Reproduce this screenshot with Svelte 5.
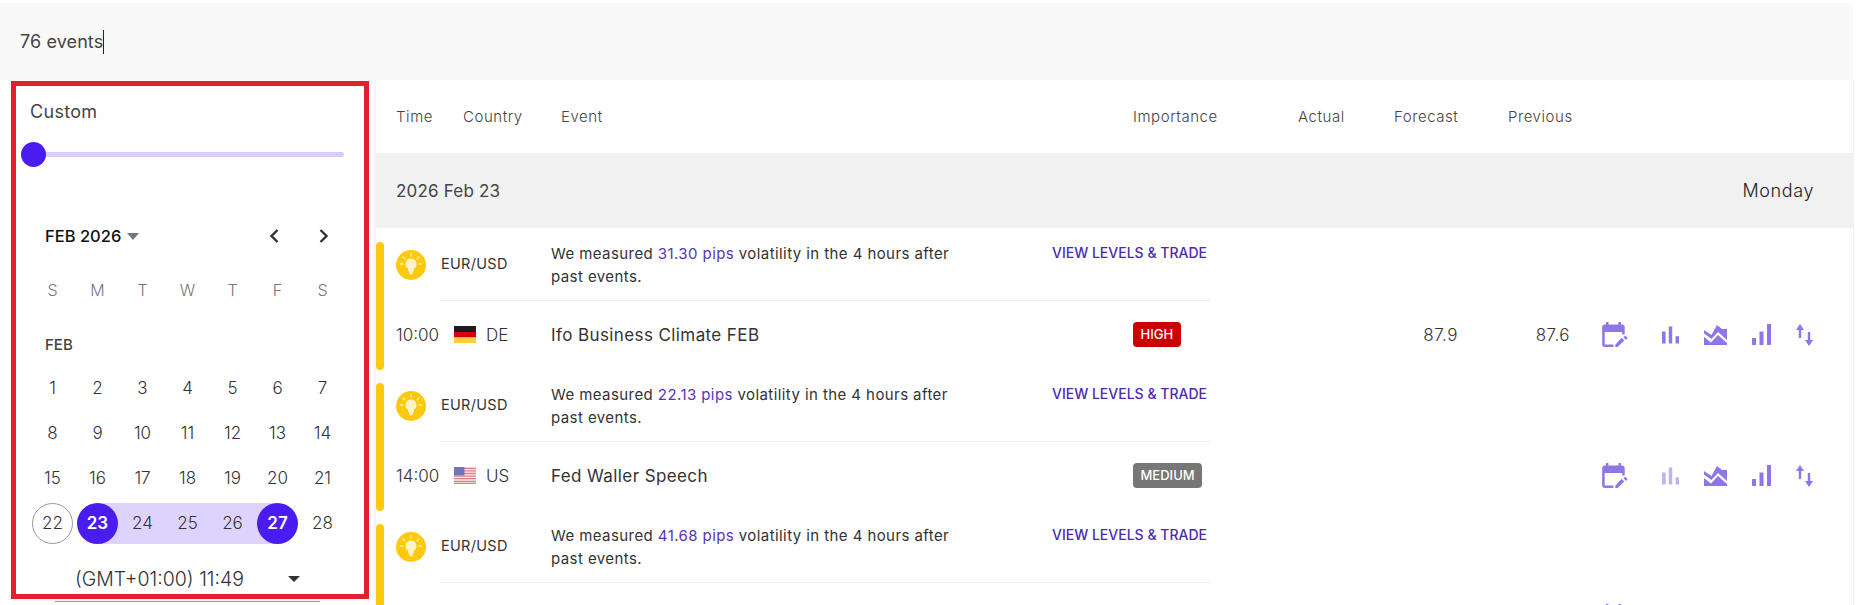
<script lang="ts">
  const dow = ['S', 'M', 'T', 'W', 'T', 'F', 'S']
  const weeks = [
    [1, 2, 3, 4, 5, 6, 7],
    [8, 9, 10, 11, 12, 13, 14],
    [15, 16, 17, 18, 19, 20, 21],
    [22, 23, 24, 25, 26, 27, 28]
  ]
  const columns = ['Time', 'Country', 'Event', 'Importance', 'Actual', 'Forecast', 'Previous']

  const events = [
    { pips: '31.30', time: '10:00', flag: 'de', country: 'DE', name: 'Ifo Business Climate FEB', level: 'HIGH', forecast: '87.9', previous: '87.6', chart: true },
    { pips: '22.13', time: '14:00', flag: 'us', country: 'US', name: 'Fed Waller Speech', level: 'MEDIUM', forecast: '', previous: '', chart: false },
    { pips: '41.68', time: '', flag: '', country: '', name: '', level: '', forecast: '', previous: '', chart: true }
  ]
</script>

{#snippet bulb()}
  <svg class="bulb" width="30" height="30" viewBox="0 0 30 30">
    <circle cx="15" cy="15" r="15" fill="#fdc90f" />
    <path d="M15 8.500a5.500 5.500 0 0 0-3 10.100V20l2 4.500h2l2-4.500v-1.400A5.500 5.500 0 0 0 15 8.500z" fill="#fff3c4" />
    <path d="M15 3.500v2.500M7 7l1.800 1.800M23 7l-1.800 1.800M4.500 14h2.300M23.200 14h2.300" stroke="#fff3c4" stroke-width="1.300" stroke-linecap="round" />
  </svg>
{/snippet}

{#snippet flag(code: string)}
  {#if code === 'de'}
    <svg width="22" height="17" viewBox="0 0 22 17">
      <rect width="22" height="6" fill="#1c1c1c" />
      <rect y="6" width="22" height="5.500" fill="#d9000d" />
      <rect y="11.500" width="22" height="5.500" fill="#ffce3a" />
    </svg>
  {:else if code === 'us'}
    <svg width="22" height="17" viewBox="0 0 22 17">
      <rect width="22" height="17" fill="#f6eeee" />
      <path d="M0 1.300h22M0 3.900h22M0 6.500h22M0 9.100h22M0 11.700h22M0 14.300h22M0 16.400h22" stroke="#dd7f86" stroke-width="1.300" />
      <rect width="10.500" height="8.500" fill="#6f76b3" />
    </svg>
  {:else}
    <span></span>
  {/if}
{/snippet}

{#snippet actions(chart: boolean)}
  <div class="actions">
    <svg class="cal" width="26" height="25" viewBox="3 2 20.500 20">
      <path d="M5 10h14v2h2V6c0-1.100-.9-2-2-2h-1V2h-2v2H8V2H6v2H5c-1.100 0-2 .9-2 2v14c0 1.100.9 2 2 2h7v-2H5V10zm17.840 4.280l-.71-.71c-.39-.39-1.020-.39-1.410 0l-.71.71 2.120 2.120.71-.71c.39-.39.39-1.020 0-1.410zM13.500 20.120V22h1.880l5.300-5.300-2.120-2.120z" />
    </svg>
    <svg class:faded={!chart} width="17" height="18" viewBox="5 5 14 14">
      <path d="M5 9.200h3V19H5zM10.600 5h2.800v14h-2.800zm5.600 8H19v6h-2.800z" />
    </svg>
    <svg width="23" height="21" viewBox="0 0 23 21">
      <path d="M0 6l7.500 5L13 1l5 4h5v11l-9-8-6.500 7L0 9.500zM0 13l7 5.500L14 11l9 8v2H0z" />
    </svg>
    <svg width="19" height="21" viewBox="0 0 19 21">
      <path d="M0 14h4v7H0zM7.500 7.500h4V21h-4zM15 0h4v21h-4z" />
    </svg>
    <svg width="17" height="22" viewBox="0 0 17 22">
      <path d="M4 0l4 6H5.200v8H2.800V6H0zM13 22l-4-6h2.800V8h2.400v8H17z" />
    </svg>
  </div>
{/snippet}

<div class="page">
  <div class="topbar"><span>76 events</span><i class="caret"></i></div>

  <div class="body">
    <div class="sidewrap">
      <aside class="side">
        <div class="custom">Custom</div>
        <div class="slider"><span class="knob"></span></div>

        <div class="month">
          <strong>FEB 2026</strong><i class="tri grey"></i>
          <span class="nav">
            <svg width="12" height="16" viewBox="0 0 12 16"><path d="M9.500 2L3.500 8l6 6" fill="none" stroke="#333" stroke-width="2.400" /></svg>
            <svg width="12" height="16" viewBox="0 0 12 16"><path d="M2.500 2l6 6-6 6" fill="none" stroke="#333" stroke-width="2.400" /></svg>
          </span>
        </div>

        <div class="grid dow">
          {#each dow as d}<span>{d}</span>{/each}
        </div>
        <div class="feb">FEB</div>
        {#each weeks as week}
          <div class="grid week">
            {#each week as day}
              <span
                class="day"
                class:today={day === 22}
                class:edge={day === 23 || day === 27}
                class:start={day === 23}
                class:end={day === 27}
                class:range={day > 23 && day < 27}
              >{day}</span>
            {/each}
          </div>
        {/each}

        <div class="zone"><span>(GMT+01:00) 11:49</span><i class="tri dark"></i></div>
      </aside>
      <div class="scrollline"></div>
    </div>

    <main class="table">
      <header class="cols">
        {#each columns as c}<span>{c}</span>{/each}
      </header>
      <div class="date"><span>2026 Feb 23</span><span class="weekday">Monday</span></div>

      <div class="events">
        {#each events as e}
          <section class="event">
            <div class="bar"></div>
            <div class="content">
              <div class="tip">
                {@render bulb()}
                <span class="pair">EUR/USD</span>
                <p>We measured <b>{e.pips} pips</b> volatility in the 4 hours after past events.</p>
                <a href="#trade">VIEW LEVELS &amp; TRADE</a>
              </div>
              <div class="divider"></div>
              <div class="row">
                <span class="time">{e.time}</span>
                {@render flag(e.flag)}
                <span class="code">{e.country}</span>
                <span class="name">{e.name}</span>
                <span>
                  {#if e.level}<span class="level {e.level.toLowerCase()}">{e.level}</span>{/if}
                </span>
                <span class="num">{e.forecast}</span>
                <span class="num">{e.previous}</span>
                {@render actions(e.chart)}
              </div>
            </div>
          </section>
        {/each}
      </div>
    </main>
  </div>
</div>

<style>
  :global(body) {
    background: #fff;
    overflow: hidden;
  }
  .page {
    height: 605px;
    padding-top: 3px;
    box-sizing: border-box;
    overflow: hidden;
    font-family: Inter, "Open Sans", sans-serif;
    color: #333;
  }
  .topbar {
    height: 77px;
    margin-right: 9px;
    background: #f9f9f9;
    padding-left: 20px;
    display: flex;
    align-items: center;
    font-size: 18px;
    letter-spacing: 0.1px;
    color: #444;
  }
  .caret {
    width: 1px;
    height: 24px;
    background: #222;
  }
  .body {
    display: flex;
    align-items: flex-start;
    height: 525px;
  }
  .sidewrap {
    flex: none;
    width: 358px;
    margin: 1px 0 0 11px;
  }
  .side {
    height: 518px;
    border: 5px solid #e1202c;
    box-sizing: border-box;
  }
  .scrollline {
    height: 1px;
    width: 265px;
    margin: 2px 0 0 44px;
    background: #999;
  }
  .custom {
    padding: 14px 0 0 14px;
    font-size: 18px;
    letter-spacing: 0.3px;
    color: #444;
    line-height: 24px;
  }
  .slider {
    position: relative;
    height: 5px;
    margin: 28px 20px 0 18px;
    background: #d9ccfb;
    border-radius: 3px;
  }
  .knob {
    position: absolute;
    left: -13px;
    top: -10px;
    width: 25px;
    height: 25px;
    border-radius: 50%;
    background: #4a1cf0;
  }
  .month {
    display: flex;
    align-items: center;
    margin: 67px 28px 0 29px;
    height: 24px;
    font-size: 16.500px;
  }
  .month strong {
    font-weight: 500;
    color: #111;
  }
  .tri {
    display: inline-block;
    border-left: 6px solid transparent;
    border-right: 6px solid transparent;
    border-top: 7px solid #777;
    margin-left: 6px;
  }
  .tri.dark {
    border-top-color: #333;
  }
  .nav {
    margin-left: auto;
    margin-right: 6px;
    display: flex;
    gap: 38px;
  }
  .grid {
    display: grid;
    grid-template-columns: repeat(7, 45px);
    margin-left: 14px;
    text-align: center;
  }
  .dow {
    margin-top: 30px;
    line-height: 24px;
    color: #777;
    font-size: 16px;
    font-weight: 300;
  }
  .feb {
    margin: 31px 0 0 29px;
    line-height: 24px;
    font-size: 15px;
    font-weight: 500;
    color: #444;
  }
  .week {
    margin-top: 4px;
    height: 41px;
    line-height: 41px;
    font-size: 17px;
    font-weight: 300;
    color: #333;
  }
  .feb + .week {
    margin-top: 11px;
  }
  .day {
    display: block;
    position: relative;
    z-index: 0;
  }
  .today {
    width: 41px;
    box-sizing: border-box;
    margin-left: 2px;
    border: 1px solid #999;
    border-radius: 50%;
    line-height: 39px;
  }
  .range {
    background: #ddd3fd;
  }
  .edge {
    color: #fff;
    font-weight: 600;
  }
  .edge::before {
    content: '';
    position: absolute;
    inset: 0;
    z-index: -2;
    background: #ddd3fd;
  }
  .start::before {
    left: 50%;
  }
  .end::before {
    right: 50%;
  }
  .edge::after {
    content: '';
    position: absolute;
    top: 0;
    left: 2px;
    width: 41px;
    height: 41px;
    z-index: -1;
    border-radius: 50%;
    background: #4a1cf0;
  }
  .zone {
    display: flex;
    align-items: center;
    margin: 23px 0 0 59px;
    line-height: 24px;
    font-size: 19.500px;
    font-weight: 300;
    color: #333;
  }
  .zone .tri {
    margin-left: 44px;
    border-top-width: 6px;
  }
  .table {
    flex: 1;
    height: 525px;
    margin: 0 8px 0 6px;
    border-left: 1px solid #f3f3f3;
    border-right: 1px solid #f1f1f1;
  }
  .cols {
    height: 73px;
    padding-left: 20px;
    display: grid;
    grid-template-columns: 67px 98px 572px 165px 96px 114px auto;
    align-items: center;
    font-size: 15px;
    letter-spacing: 0.55px;
    font-weight: 300;
    color: #444;
  }
  .date {
    height: 75px;
    background: #f1f1f1;
    display: flex;
    justify-content: space-between;
    align-items: center;
    padding: 0 39px 0 20px;
    font-size: 17px;
    letter-spacing: 0.2px;
    color: #444;
  }
  .weekday {
    font-size: 18px;
    letter-spacing: 0.6px;
    font-weight: 300;
    color: #222;
  }
  .events {
    padding-top: 14px;
  }
  .event {
    display: flex;
    height: 128px;
    margin-bottom: 13px;
  }
  .bar {
    flex: none;
    width: 8px;
    border-radius: 4px;
    background: #fdc90f;
  }
  .content {
    flex: 1;
  }
  .tip {
    height: 58px;
    padding-left: 12px;
    display: grid;
    grid-template-columns: 30px 125px 501px auto;
    align-items: start;
    font-size: 15px;
    line-height: 23px;
    color: #333;
  }
  .bulb {
    margin-top: 8px;
  }
  .pair {
    margin-top: 7px;
    padding-left: 15px;
    line-height: 30px;
    font-size: 14.500px;
    letter-spacing: 0.3px;
  }
  .tip p {
    margin: 0;
    max-width: 405px;
    letter-spacing: 0.42px;
  }
  .tip b {
    font-weight: 400;
    color: #5a34b8;
  }
  .tip a {
    margin-top: -1px;
    color: #4c2ab0;
    font-size: 14px;
    font-weight: 500;
    text-decoration: none;
    white-space: nowrap;
  }
  .divider {
    height: 1px;
    width: 770px;
    margin-left: 56px;
    background: #eee;
  }
  .row {
    height: 67px;
    padding-left: 12px;
    display: grid;
    grid-template-columns: 58px 32px 65px 582px 261px 64px 112px auto;
    align-items: center;
    font-size: 17px;
    font-weight: 300;
    color: #333;
  }
  .name {
    font-weight: 400;
    letter-spacing: 0.4px;
  }
  .num {
    text-align: right;
    letter-spacing: 0.5px;
  }
  .level {
    display: inline-block;
    padding: 0 7.500px;
    height: 25px;
    line-height: 25px;
    border-radius: 4px;
    font-size: 13px;
    font-weight: 500;
    letter-spacing: 0;
    color: #fff;
    vertical-align: middle;
  }
  .high {
    background: #cc0000;
  }
  .medium {
    background: #777;
  }
  .actions {
    margin-left: 32px;
    display: flex;
    align-items: center;
    gap: 25px;
  }
  .actions svg {
    fill: #8f76e6;
  }
  .actions .cal {
    margin-right: 9px;
  }
  .actions .faded {
    opacity: 0.55;
  }
</style>
